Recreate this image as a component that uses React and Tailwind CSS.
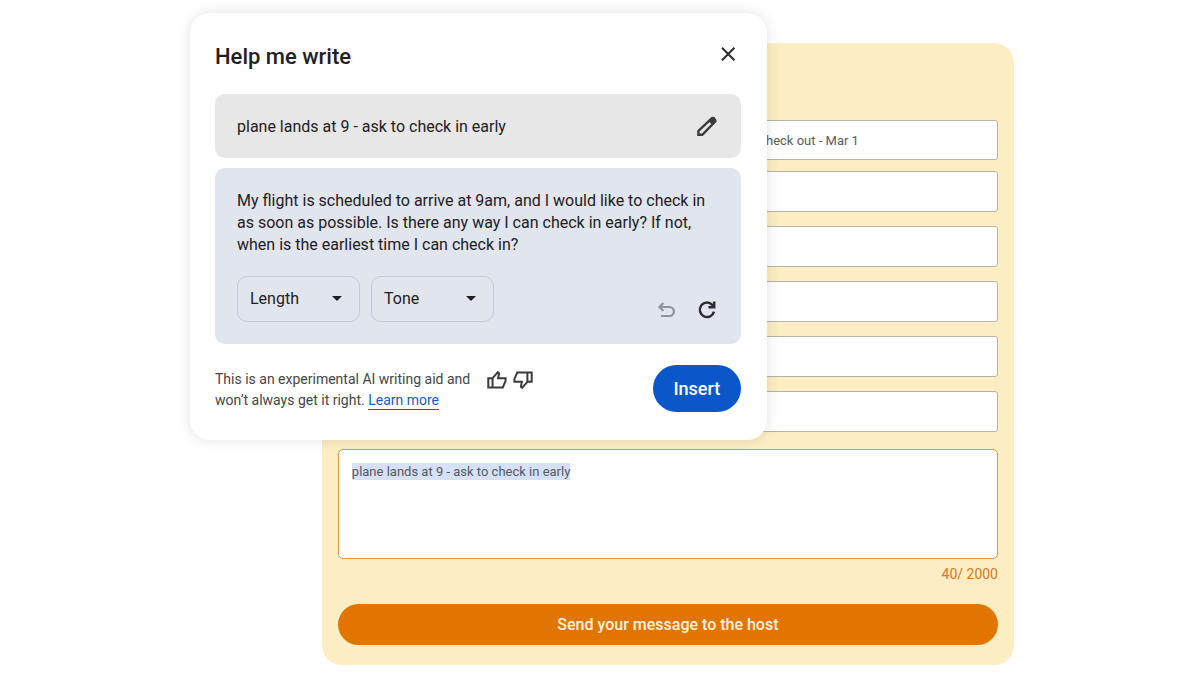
import { useEffect, useRef } from 'react';

const guestFields = ['First name', 'Last name', 'Email', 'Phone', 'Subject'];

function Dropdown({ label }) {
  return (
    <div className="relative w-[123px]">
      <select
        aria-label={label}
        defaultValue={label}
        className="h-[46px] w-full appearance-none rounded-[10px] border border-[#c5cad5] bg-transparent pl-3 pr-9 text-base text-[#1f2023]"
      >
        <option value={label}>{label}</option>
      </select>
      <svg viewBox="0 0 24 24" className="pointer-events-none absolute right-[11px] top-[10px] h-6 w-6 fill-[#1f2023]" aria-hidden="true">
        <path d="M7 10h10l-5 5z" />
      </svg>
    </div>
  );
}

function ThumbIcon({ className }) {
  return (
    <svg viewBox="0 0 22 22" className={className} aria-hidden="true">
      <path d="M2.3 9.2h4.3v9.3H2.3zM6.6 9.2l5.3-6 1.2 1.1-1 4.9h7.5v2.6l-2.8 6.7H6.6" />
    </svg>
  );
}

function HelpMeWrite() {
  return (
    <section
      role="dialog"
      aria-label="Help me write"
      className="absolute left-0 top-0 w-[70%] rounded-[20px] bg-white pb-7 pl-[25px] pr-[26px] shadow-[0_0_14px_rgba(0,0,0,0.12)]"
    >
      <div className="flex h-[81px] items-center justify-between pt-[5px]">
        <h1 className="text-[22px] font-medium text-[#1f2023]">Help me write</h1>
        <button type="button" aria-label="Close" className="pb-1">
          <svg viewBox="0 0 24 24" className="h-6 w-6 fill-none stroke-[#2b2c2e] stroke-2" aria-hidden="true">
            <path d="M5 5.8l12.4 12.4M17.4 5.8L5 18.2" />
          </svg>
        </button>
      </div>

      {/* Prompt */}
      <div className="flex h-16 items-center justify-between rounded-[10px] bg-[#e7e7e7] px-[22px]">
        <p className="pt-px text-base text-[#1f2023]">plane lands at 9 - ask to check in early</p>
        <button type="button" aria-label="Edit prompt">
          <svg viewBox="0 0 24 24" className="h-6 w-6 fill-none stroke-[#3a3b3d] stroke-[2.4]" aria-hidden="true">
            <path d="M3.4 20.8v-3.9L16.4 4.6q1.3-1.2 2.5 0l.9.9q1.2 1.2 0 2.5L7.3 20.8z" />
            <path d="M14.4 6.4l3.6 3.6" />
            <path d="M15.8 6.2l3-1.4.6 2.6-1.8 1.2z" className="fill-[#3a3b3d]" />
          </svg>
        </button>
      </div>

      {/* Suggestion */}
      <div className="mt-[10px] rounded-[10px] bg-[#e1e5ee] px-[22px] py-[22px]">
        <p className="text-base leading-[22px] text-[#1f2023]">
          My flight is scheduled to arrive at 9am, and I would like to check in as soon as possible. Is there any way I can check in early? If not, when is the earliest time I can check in?
        </p>
        <div className="mt-5 flex items-end justify-between">
          <div className="flex gap-[11px]">
            <Dropdown label="Length" />
            <Dropdown label="Tone" />
          </div>
          <div className="flex gap-[17px]">
            <button type="button" aria-label="Undo">
              <svg viewBox="0 0 24 24" className="h-6 w-6 fill-none stroke-[#8f939b] stroke-[2.2]" aria-hidden="true">
                <path d="M9.4 5L5.4 9l4 4M5.6 9h9.8a4.5 4.5 0 0 1 0 9H7" />
              </svg>
            </button>
            <button type="button" aria-label="Regenerate">
              <svg viewBox="0 0 24 24" className="h-6 w-6 fill-none stroke-[#2b2d31] stroke-[2.5]" aria-hidden="true">
                <path d="M19 13.6A7.2 7.2 0 1 1 17.2 6.8L19 8.8" />
                <path d="M19.2 3.4v5.8h-5.8" />
              </svg>
            </button>
          </div>
        </div>
      </div>

      <div className="mt-[21px] flex items-start">
        <p className="mt-1 text-sm leading-[21px] text-[#444648]">
          This is an experimental AI writing aid and
          <br />
          won’t always get it right.{' '}
          <a href="#learn-more" className="text-[#1a5bbf] underline underline-offset-4">Learn more</a>
        </p>
        <div className="ml-4 mt-1 flex gap-1">
          <button type="button" aria-label="Good suggestion">
            <ThumbIcon className="h-[22px] w-[22px] fill-none stroke-[#3a3b3d] stroke-2" />
          </button>
          <button type="button" aria-label="Bad suggestion">
            <ThumbIcon className="h-[22px] w-[22px] rotate-180 fill-none stroke-[#3a3b3d] stroke-2" />
          </button>
        </div>
        <button type="button" className="ml-auto h-[47px] w-[88px] rounded-full bg-[#0b57c9] text-lg font-medium text-white">
          Insert
        </button>
      </div>
    </section>
  );
}

export default function App() {
  const messageRef = useRef(null);

  useEffect(() => {
    messageRef.current.focus({ preventScroll: true });
    messageRef.current.select();
  }, []);

  return (
    <main className="bg-white pb-[10px] pl-5 pr-4 pt-[13px] font-['Roboto',sans-serif]">
      <div className="relative mx-auto w-full max-w-[824px] pt-[30px]">
        <form className="ml-[16%] rounded-[20px] bg-[#fdedc3] px-4 pb-5 pt-[77px]" onSubmit={(e) => e.preventDefault()}>
          <div className="flex justify-end">
            <input
              type="text"
              aria-label="Check out"
              defaultValue="Check out - Mar 1"
              className="h-10 w-[39%] rounded-[3px] border border-[#b5b4a8] bg-white px-4 text-[13px] text-[#5a5b5d]"
            />
          </div>
          <div className="mt-[11px] flex flex-col gap-[14px]">
            {guestFields.map((name) => (
              <input
                key={name}
                type="text"
                aria-label={name}
                className="h-[41px] w-full rounded-[3px] border border-[#b5b4a8] bg-white px-[13px] text-[13px] text-[#5a5b5d]"
              />
            ))}
          </div>
          <textarea
            ref={messageRef}
            aria-label="Message"
            defaultValue="plane lands at 9 - ask to check in early"
            className="mt-[17px] block h-[110px] w-full resize-none rounded-[5px] border border-[#e0963f] bg-white px-[13px] py-[13px] text-[13px] leading-[17px] text-[#56595f] caret-transparent outline-none selection:bg-[#d6e0f6] selection:text-[#56595f]"
          />
          <p className="mt-[5px] text-right text-sm leading-5 text-[#d57a1c]">40/ 2000</p>
          <button type="submit" className="mt-5 h-[41px] w-full rounded-full bg-[#e27500] text-base font-medium text-[#fff3dc]">
            Send your message to the host
          </button>
        </form>

        <HelpMeWrite />
      </div>
    </main>
  );
}
